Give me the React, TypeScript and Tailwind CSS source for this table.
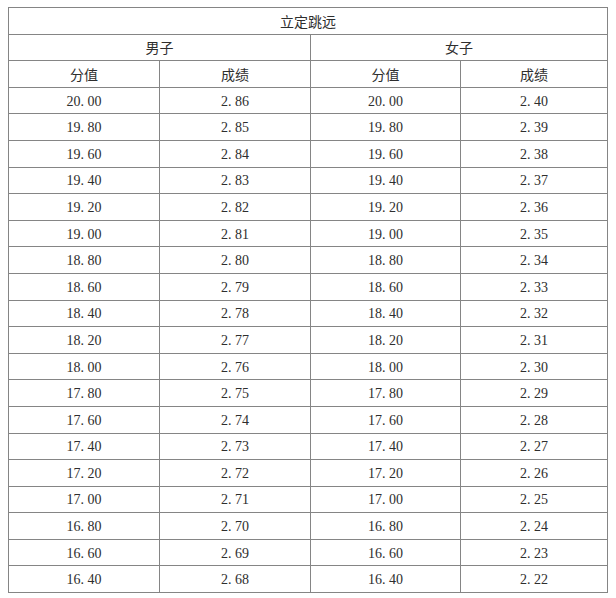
import React from "react";

const scores = Array.from({ length: 19 }, (_, i) => (20 - i * 0.2).toFixed(2));
const male = Array.from({ length: 19 }, (_, i) => (2.86 - i * 0.01).toFixed(2));
const female = Array.from({ length: 19 }, (_, i) => (2.4 - i * 0.01).toFixed(2));

function Num({ v }: { v: string }) {
  const [a, b] = v.split(".");
  return (
    <span className="font-['Liberation_Serif',serif]">
      {a}
      <span className="inline-block w-[7px] text-left">.</span>
      {b}
    </span>
  );
}

const cell = "border border-[#858585] text-center align-middle p-0 h-[26.6px] leading-none";

export default function App() {
  return (
    <div className="bg-white w-[616px] h-[598px] pl-[8px] pt-[7px] text-[14px] text-[#2e2e2e] font-['Noto_Sans_CJK_SC',sans-serif]">
      <table className="border-collapse border-[1.5px] border-[#858585] table-fixed w-[599px]">
        <colgroup>
          <col className="w-[151px]" />
          <col className="w-[151px]" />
          <col className="w-[150px]" />
          <col className="w-[147px]" />
        </colgroup>
        <tbody>
          <tr>
            <td colSpan={4} className={cell}>立定跳远</td>
          </tr>
          <tr>
            <td colSpan={2} className={cell}>男子</td>
            <td colSpan={2} className={cell}>女子</td>
          </tr>
          <tr>
            <td className={cell}>分值</td>
            <td className={cell}>成绩</td>
            <td className={cell}>分值</td>
            <td className={cell}>成绩</td>
          </tr>
          {scores.map((s, i) => (
            <tr key={s}>
              <td className={cell}><Num v={s} /></td>
              <td className={cell}><Num v={male[i]} /></td>
              <td className={cell}><Num v={s} /></td>
              <td className={cell}><Num v={female[i]} /></td>
            </tr>
          ))}
        </tbody>
      </table>
    </div>
  );
}
